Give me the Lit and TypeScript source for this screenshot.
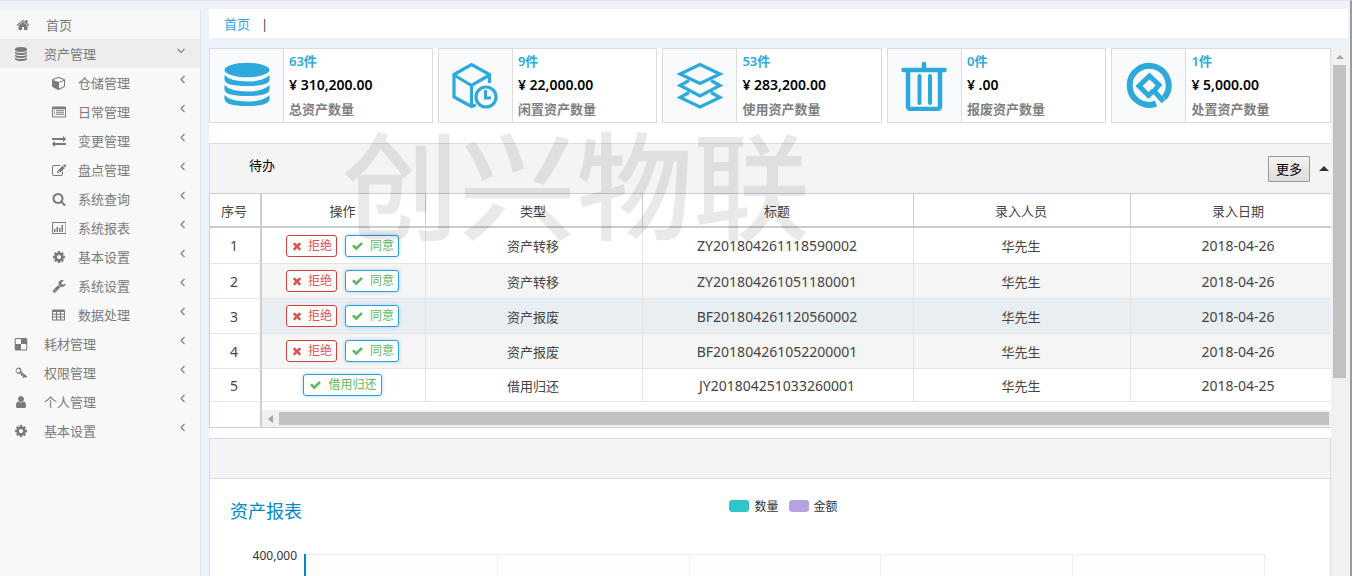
import { LitElement, html, css, svg, nothing } from "lit";
import { customElement, property } from "lit/decorators.js";
import { classMap } from "lit/directives/class-map.js";

const COG =
  "M1152 896q0-106-75-181t-181-75-181 75-75 181 75 181 181 75 181-75 75-181zm512-109v222q0 12-8 23t-20 13l-185 28q-19 54-39 91 35 50 107 138 10 12 10 25t-9 23q-27 37-99 108t-94 71q-12 0-26-9l-138-108q-44 23-91 38-16 136-29 186-7 28-36 28h-222q-14 0-24.5-8.5t-11.5-21.5l-28-184q-49-16-90-37l-141 107q-10 9-25 9-14 0-25-11-126-114-165-168-7-10-7-23 0-12 8-23 15-21 51-66.5t54-70.5q-27-50-41-99l-183-27q-13-2-21-12.5t-8-23.5v-222q0-12 8-23t19-13l186-28q14-46 39-92-40-57-107-138-10-12-10-24 0-10 9-23 26-36 98.5-107.5t94.5-71.5q13 0 26 10l138 107q44-23 91-38 16-136 29-186 7-28 36-28h222q14 0 24.5 8.5t11.5 21.5l28 184q49 16 90 37l142-107q9-9 24-9 13 0 25 10 129 119 165 170 7 8 7 22 0 12-8 23-15 21-51 66.5t-54 70.5q26 50 41 98l183 28q13 2 21 12.5t8 23.5z";

const ICONS: Record<string, string> = {
  home: "M1472 992v480q0 26-19 45t-45 19h-384v-384h-256v384h-384q-26 0-45-19t-19-45v-480q0-1 .5-3t.5-3l575-474 575 474q1 2 1 6zm223-69l-62 74q-8 9-21 11h-3q-13 0-21-7l-692-577-692 577q-12 8-24 7-13-2-21-11l-62-74q-8-10-7-23.5t11-21.5l719-599q32-26 76-26t76 26l244 204v-195q0-14 9-23t23-9h192q14 0 23 9t9 23v408l219 182q10 8 11 21.5t-7 23.5z",
  database:
    "M896 768q237 0 443-43t325-127v170q0 69-103 128t-280 93.5-385 34.5-385-34.5-280-93.5-103-128v-170q119 84 325 127t443 43zm0 768q237 0 443-43t325-127v170q0 69-103 128t-280 93.5-385 34.5-385-34.5-280-93.5-103-128v-170q119 84 325 127t443 43zm0-384q237 0 443-43t325-127v170q0 69-103 128t-280 93.5-385 34.5-385-34.5-280-93.5-103-128v-170q119 84 325 127t443 43zm0-1152q208 0 385 34.5t280 93.5 103 128v128q0 69-103 128t-280 93.5-385 34.5-385-34.5-280-93.5-103-128v-128q0-69 103-128t280-93.5 385-34.5z",
  cube: "M896 1629l640-349v-636l-640 233v752zm-64-865l698-254-698-254-698 254zm832-252v768q0 35-18 65t-49 47l-704 384q-28 16-61 16t-61-16l-704-384q-31-17-49-47t-18-65v-768q0-40 23-73t61-47l704-256q22-8 44-8t44 8l704 256q38 14 61 47t23 73z",
  list: "M128 192h1536q128 0 128 128v1152q0 128-128 128h-1536q-128 0-128-128v-1152q0-128 128-128zm0 320v960h1536v-960zm128 96h128v128h-128zm256 0h1024v128h-1024zm-256 256h128v128h-128zm256 0h1024v128h-1024zm-256 256h128v128h-128zm256 0h1024v128h-1024z",
  exchange:
    "M1792 1184v192q0 13-9.5 22.5t-22.5 9.5h-1376v192q0 13-9.5 22.5t-22.5 9.5q-12 0-24-10l-319-320q-9-9-9-22 0-14 9-23l320-320q9-9 23-9 13 0 22.5 9.5t9.5 22.5v192h1376q13 0 22.5 9.5t9.5 22.5zm0-544q0 14-9 23l-320 320q-9 9-23 9-13 0-22.5-9.5t-9.5-22.5v-192h-1376q-13 0-22.5-9.5t-9.5-22.5v-192q0-13 9.5-22.5t22.5-9.5h1376v-192q0-14 9-23t23-9q12 0 24 10l319 319q9 9 9 23z",
  edit: "M288 256h860l-128 128h-732q-160 0-160 160v832q0 160 160 160h832q160 0 160-160v-254l128-128v382q0 288-288 288h-832q-288 0-288-288v-832q0-288 288-288zm1060 96l288 288-672 672h-288v-288zm-544 728v104h96v96h56l96-96-152-152zm624-808l92-92q68-68 136 0l152 152q68 68 0 136l-92 92z",
  search:
    "M1216 832q0-185-131.5-316.5t-316.5-131.5-316.5 131.5-131.5 316.5 131.5 316.5 316.5 131.5 316.5-131.5 131.5-316.5zm512 832q0 52-38 90t-90 38q-54 0-90-38l-343-342q-179 124-399 124-143 0-273.5-55.5t-225-150-150-225-55.5-273.5 55.5-273.5 150-225 225-150 273.5-55.5 273.5 55.5 225 150 150 225 55.5 273.5q0 220-124 399l343 343q37 37 37 90z",
  chart:
    "M128 128h1600q128 0 128 128v1280q0 128-128 128h-1600q-128 0-128-128v-1280q0-128 128-128zm0 128v1280h1600v-1280zm128 768h192v384h-192zm320-256h192v640h-192zm320 128h192v512h-192zm320-384h192v896h-192z",
  cog: COG,
  wrench:
    "M448 1472q0-26-19-45t-45-19-45 19-19 45 19 45 45 19 45-19 19-45zm644-420l-682 682q-37 37-90 37-52 0-91-37l-106-108q-38-36-38-90 0-53 38-91l681-681q39 98 114.5 173.5t173.5 114.5zm634-435q0 39-23 106-47 134-164.5 217.5t-258.5 83.5q-185 0-316.5-131.5t-131.5-316.5 131.5-316.5 316.5-131.5q58 0 121.5 16.5t107.5 46.5q16 11 16 28t-16 28l-293 169v224l193 107q5-3 79-48.5t135.5-81 70.5-35.5q15 0 23.5 10t8.5 25z",
  grid: "M128 192h1408q128 0 128 128v1152q0 128-128 128h-1408q-128 0-128-128v-1152q0-128 128-128zm0 320v224h384v-224zm512 0v224h384v-224zm512 0v224h384v-224zm-1024 352v224h384v-224zm512 0v224h384v-224zm512 0v224h384v-224zm-1024 352v256h384v-256zm512 0v256h384v-256zm512 0v256h384v-256z",
  blocks:
    "M256 128h1280q160 0 160 160v1280q0 160-160 160h-1280q-160 0-160-160v-1280q0-160 160-160zm-32 128v640h672v-640zm672 640v704h672v-704z",
  key: "M540 156q180 0 300 120t120 300q0 80-36 160l740 560q40 36 8 84l-72 88q-40 44-88 8l-110-84-118 150q-36 40-80 8l-92-72q-40-36-8-80l116-152-100-76-78 100q-36 40-80 8l-86-68q-40-36-8-80l76-98-90-68q-100 56-220 56-180 0-300-120t-120-300 120-300 300-120zm0 200q-100 0-166 66t-66 166 66 166 166 66 166-66 66-166-66-166-166-66z",
  user: "M1536 1399q0 109-62.5 187t-150.5 78h-854q-88 0-150.5-78t-62.5-187q0-85 8.5-160.5t31.5-152 58.5-131 94-89 134.5-34.5q131 128 313 128t313-128q76 0 134.5 34.5t94 89 58.5 131 31.5 152 8.5 160.5zm-256-887q0 159-112.5 271.5t-271.5 112.5-271.5-112.5-112.5-271.5 112.5-271.5 271.5-112.5 271.5 112.5 112.5 271.5z",
  check:
    "M1671 566q0 40-28 68l-724 724-136 136q-28 28-68 28t-68-28l-136-136-362-362q-28-28-28-68t28-68l136-136q28-28 68-28t68 28l294 295 656-657q28-28 68-28t68 28l136 136q28 28 28 68z",
  times:
    "M1490 1322q0 40-28 68l-136 136q-28 28-68 28t-68-28l-294-294-294 294q-28 28-68 28t-68-28l-136-136q-28-28-28-68t28-68l294-294-294-294q-28-28-28-68t28-68l136-136q28-28 68-28t68 28l294 294 294-294q28-28 68-28t68 28l136 136q28 28 28 68t-28 68l-294 294 294 294q28 28 28 68z",
};

const icon = (name: string) =>
  html`<svg class="icon" viewBox="0 0 1792 1792" aria-hidden="true">
    <path fill="currentColor" fill-rule="evenodd" d=${ICONS[name]}></path>
  </svg>`;

interface MenuItem {
  icon: string;
  label: string;
  level: "root" | "top" | "sub";
  state?: "open" | "closed";
}

const MENU: MenuItem[] = [
  { icon: "home", label: "首页", level: "root" },
  { icon: "database", label: "资产管理", level: "top", state: "open" },
  { icon: "cube", label: "仓储管理", level: "sub", state: "closed" },
  { icon: "list", label: "日常管理", level: "sub", state: "closed" },
  { icon: "exchange", label: "变更管理", level: "sub", state: "closed" },
  { icon: "edit", label: "盘点管理", level: "sub", state: "closed" },
  { icon: "search", label: "系统查询", level: "sub", state: "closed" },
  { icon: "chart", label: "系统报表", level: "sub", state: "closed" },
  { icon: "cog", label: "基本设置", level: "sub", state: "closed" },
  { icon: "wrench", label: "系统设置", level: "sub", state: "closed" },
  { icon: "grid", label: "数据处理", level: "sub", state: "closed" },
  { icon: "blocks", label: "耗材管理", level: "top", state: "closed" },
  { icon: "key", label: "权限管理", level: "top", state: "closed" },
  { icon: "user", label: "个人管理", level: "top", state: "closed" },
  { icon: "cog", label: "基本设置", level: "top", state: "closed" },
];

const FONT = css`"Noto Sans", "Noto Sans CJK SC", sans-serif`;

@customElement("side-menu")
class SideMenu extends LitElement {
  static styles = css`
    :host {
      display: block;
      background: #f8f8f8;
      border-right: 1px solid #e4e6e8;
      font-family: ${FONT};
    }
    .list {
      list-style: none;
      margin: 0;
      padding: 0;
    }
    .item {
      display: flex;
      align-items: center;
      height: 29px;
      padding: 0 14px;
      gap: 16px;
      font-size: 13px;
      color: #7a7a7a;
      text-decoration: none;
    }
    .root {
      padding-left: 16px;
    }
    .sub {
      padding-left: 52px;
      gap: 12px;
    }
    .open {
      background: #ededed;
    }
    .icon {
      width: 14px;
      height: 14px;
      flex: none;
    }
    .label {
      flex: 1;
    }
    .arrow {
      width: 9px;
      height: 9px;
      margin-bottom: 7px;
    }
  `;

  render() {
    return html`<nav aria-label="主菜单">
      <ul class="list">
        ${MENU.map(
          (m) => html`<li>
            <a
              href="#"
              class=${classMap({ item: true, [m.level]: true, open: m.state === "open" })}
            >
              ${icon(m.icon)}<span class="label">${m.label}</span>
              ${m.state
                ? html`<svg class="arrow" viewBox="0 0 9 9" aria-hidden="true">
                    <path
                      d=${m.state === "open" ? "M.5 3L4 6.500L7.500 3" : "M7.500 1L4 4.500L7.500 8"}
                      fill="none"
                      stroke="#808080"
                      stroke-width="1.200"
                    ></path>
                  </svg>`
                : nothing}
            </a>
          </li>`
        )}
      </ul>
    </nav>`;
  }
}

const STAT_ART: Record<string, unknown> = {
  total: svg`<g fill="#2da9dc"><ellipse cx="24" cy="9" rx="22.500" ry="7.200"/>
    <path d="M1.500 14q6 6.500 22.500 6.500t22.500-6.500v4.500q0 6.500-22.500 6.500t-22.500-6.500z"/>
    <path d="M1.500 24q6 6.500 22.500 6.500t22.500-6.500v4.500q0 6.500-22.500 6.500t-22.500-6.500z"/>
    <path d="M1.500 34q6 6.500 22.500 6.500t22.500-6.500v4q0 7-22.500 7t-22.500-7z"/></g>`,
  idle: svg`<g fill="none" stroke="#2da9dc" stroke-width="3.200"><path d="M38.500 22V13.500L20.500 3.500L3 13.500V36L20.500 45.500L25 44"/>
    <path d="M3 14L20.500 24.500L38.500 14M20.500 24V45"/><circle cx="35" cy="36" r="10"/><path d="M34.500 29v8h5.500" stroke-width="3"/></g>`,
  used: svg`<g fill="none" stroke="#2da9dc" stroke-width="3.200"><path d="M24 3.500L44 13L24 22.500L4 13z"/>
    <path d="M13 19.500L4 24.500L24 35L44 24.500L35 19.500M13 31.500L4 36.500L24 46L44 36.500L35 31.500"/></g>`,
  scrap: svg`<g fill="none" stroke="#2da9dc" stroke-linecap="round"><path d="M3.500 9h41M24 3v5" stroke-width="4.500"/>
    <path d="M8 10V45q0 3 3 3H37q3 0 3-3V10" stroke-width="4.500"/><path d="M19.500 15v27M30 15v27" stroke-width="4"/></g>`,
  dispose: svg`<g fill="none" stroke="#2da9dc"><path d="M31 42.600A19.500 19.500 0 1 1 39 37" stroke-width="6"/>
    <path d="M28.500 29.500L23.500 34.500L14 25L24.500 15L34 24L29 30L38.500 40.500" stroke-width="5"/></g>`,
};

@customElement("stat-card")
class StatCard extends LitElement {
  @property() art = "total";
  @property() count = "";
  @property() amount = "";
  @property() caption = "";

  static styles = css`
    :host {
      display: flex;
      border: 1px solid #dcdcdc;
      background: #fff;
      font-family: ${FONT};
      font-size: 13px;
      font-weight: 600;
      line-height: 24px;
      min-width: 0;
    }
    .art {
      flex: none;
      width: 73px;
      display: flex;
      align-items: center;
      justify-content: center;
      background: #f9fafc;
      border-right: 1px solid #dcdcdc;
    }
    .drawing {
      width: 48px;
      height: 50px;
    }
    .facts {
      padding: 0 5px 1px;
      white-space: nowrap;
    }
    .count {
      color: #2da9dc;
    }
    .amount {
      color: #000;
      font-size: 14px;
    }
    .caption {
      color: #7f7f7f;
    }
  `;

  render() {
    return html`<div class="art">
        <svg class="drawing" viewBox="0 0 48 50" aria-hidden="true">${STAT_ART[this.art]}</svg>
      </div>
      <div class="facts">
        <div class="count">${this.count}</div>
        <div class="amount">${this.amount}</div>
        <div class="caption">${this.caption}</div>
      </div>`;
  }
}

const STATS = [
  ["total", "63件", "¥ 310,200.00", "总资产数量"],
  ["idle", "9件", "¥ 22,000.00", "闲置资产数量"],
  ["used", "53件", "¥ 283,200.00", "使用资产数量"],
  ["scrap", "0件", "¥ .00", "报废资产数量"],
  ["dispose", "1件", "¥ 5,000.00", "处置资产数量"],
];

const ROWS = [
  ["资产转移", "ZY201804261118590002", "华先生", "2018-04-26"],
  ["资产转移", "ZY201804261051180001", "华先生", "2018-04-26"],
  ["资产报废", "BF201804261120560002", "华先生", "2018-04-26"],
  ["资产报废", "BF201804261052200001", "华先生", "2018-04-26"],
  ["借用归还", "JY201804251033260001", "华先生", "2018-04-25"],
];

@customElement("todo-table")
class TodoTable extends LitElement {
  static styles = css`
    :host {
      display: block;
      border: solid #d0d0d0;
      border-width: 0 0 1px 1px;
      overflow: hidden;
      font-family: ${FONT};
    }
    .table {
      width: calc(100% + 17px);
      table-layout: fixed;
      border-collapse: separate;
      border-spacing: 0;
      color: #444;
      font-size: 13px;
    }
    .c-no {
      width: 52px;
    }
    .c-act {
      width: 164px;
    }
    .c-mid {
      width: 217px;
    }
    .c-title {
      width: 271px;
    }
    th {
      height: 32px;
      padding: 0 2px 0 0;
      font-weight: 400;
      border-right: 1px solid #ccc;
      border-bottom: 2px solid #ccc;
    }
    td {
      height: 34px;
      padding: 0 2px 0 0;
      text-align: center;
      border-right: 1px solid #e4e4e4;
      border-bottom: 1px solid #e4e4e4;
    }
    th:first-child,
    td:first-child {
      border-right: 2px solid #ccc;
    }
    .first td {
      height: 35px;
    }
    .last td {
      height: 32px;
    }
    .even td:not(:first-child) {
      background: #f5f5f5;
    }
    .hover td:not(:first-child) {
      background: #e9eef3;
    }
    .code {
      font-size: 14px;
    }
    .actions {
      display: flex;
      justify-content: center;
      gap: 8px;
    }
    .act {
      display: flex;
      align-items: center;
      gap: 5px;
      height: 22px;
      padding: 0 4px;
      box-sizing: border-box;
      border: 1px solid #d43f3a;
      border-radius: 3px;
      background: #fff;
      color: #d9534f;
      font: 12px/18px ${FONT};
    }
    .ok {
      border-color: #2a9fd8;
      color: #5cb85c;
      box-shadow: 0 0 4px #a9d4f0;
    }
    .icon {
      width: 12px;
      height: 12px;
    }
    .ok .icon {
      width: 15px;
    }
    .foot {
      display: flex;
      height: 25px;
    }
    .corner {
      width: 50px;
      border-right: 2px solid #ccc;
    }
    .track {
      flex: 1;
      display: flex;
      align-items: center;
      gap: 6px;
      height: 17px;
      margin-top: 8px;
      padding: 0 2px 0 6px;
      background: #f1f1f1;
    }
    .left {
      border: 4px solid transparent;
      border-width: 4px 5px 4px 0;
      border-right-color: #a3a3a3;
    }
    .thumb {
      flex: 1;
      height: 13px;
      background: #c1c1c1;
    }
  `;

  render() {
    return html`<table class="table">
        <colgroup>
          <col class="c-no" /><col class="c-act" /><col class="c-mid" />
          <col class="c-title" /><col class="c-mid" /><col class="c-mid" />
        </colgroup>
        <thead>
          <tr>
            ${["序号", "操作", "类型", "标题", "录入人员", "录入日期"].map(
              (h) => html`<th scope="col">${h}</th>`
            )}
          </tr>
        </thead>
        <tbody>
          ${ROWS.map(
            ([kind, code, who, date], i) => html`<tr
              class=${classMap({ first: i === 0, even: i % 2 === 1, hover: i === 2, last: i === 4 })}
            >
              <td class="code">${i + 1}</td>
              <td>
                <div class="actions">
                  ${i === 4
                    ? html`<button type="button" class="act ok">${icon("check")}借用归还</button>`
                    : html`<button type="button" class="act">${icon("times")}拒绝</button>
                        <button type="button" class="act ok">${icon("check")}同意</button>`}
                </div>
              </td>
              <td>${kind}</td>
              <td class="code">${code}</td>
              <td>${who}</td>
              <td class="code">${date}</td>
            </tr>`
          )}
        </tbody>
      </table>
      <div class="foot">
        <div class="corner"></div>
        <div class="track"><span class="left"></span><span class="thumb"></span></div>
      </div>`;
  }
}

@customElement("asset-chart")
class AssetChart extends LitElement {
  static styles = css`
    :host {
      display: block;
      padding: 0 65px 0 20px;
      font-family: ${FONT};
      font-size: 12px;
      color: #333;
    }
    .head {
      display: grid;
      grid-template-columns: 1fr auto 1fr;
      height: 75px;
      padding-top: 18px;
      box-sizing: border-box;
    }
    .title {
      margin: 0;
      font-size: 18px;
      font-weight: 400;
      line-height: 28px;
      color: #008acd;
    }
    .legend {
      display: flex;
      gap: 10px;
      height: 18px;
      align-items: center;
      margin-left: 72px;
    }
    .key {
      display: flex;
      align-items: center;
      gap: 5px;
    }
    .swatch {
      width: 20px;
      height: 12px;
      border-radius: 3px;
      background: #2ec7c9;
    }
    .money {
      background: #b6a2de;
    }
    .plot {
      display: flex;
      gap: 7px;
    }
    .axis {
      width: 67px;
      text-align: right;
      line-height: 16px;
      margin-top: -6px;
    }
    .cells {
      flex: 1;
      display: grid;
      grid-template-columns: repeat(5, 1fr);
      height: 240px;
      border-left: 2px solid #008acd;
    }
    .cell {
      border: solid #eee;
      border-width: 1px 1px 0 0;
      background: #fdfdfd;
    }
  `;

  render() {
    return html`<div class="head">
        <h2 class="title">资产报表</h2>
        <div class="legend">
          <span class="key"><span class="swatch"></span>数量</span>
          <span class="key"><span class="swatch money"></span>金额</span>
        </div>
      </div>
      <div class="plot">
        <div class="axis">400,000</div>
        <div class="cells">${[0, 1, 2, 3, 4].map(() => html`<div class="cell"></div>`)}</div>
      </div>`;
  }
}

@customElement("app-root")
class AppRoot extends LitElement {
  static styles = css`
    :host {
      display: flex;
      position: relative;
      height: 100vh;
      box-sizing: border-box;
      overflow: hidden;
      border-top: 1px solid #e4e5e7;
      border-right: 2px solid #9b9b9b;
      background: #edf1fa;
      font-family: ${FONT};
      font-size: 13px;
      color: #000;
    }
    .side {
      flex: none;
      width: 200px;
      margin-top: 9px;
    }
    .main {
      flex: 1;
      min-width: 0;
      display: flex;
      flex-direction: column;
      gap: 10px;
      padding: 8px 2px 0 8px;
    }
    .crumbs {
      flex: none;
      display: flex;
      align-items: center;
      gap: 11px;
      height: 29px;
      padding: 0 15px;
      background: #fff;
      color: #444;
    }
    .crumb {
      color: #2da9dc;
      text-decoration: none;
    }
    .scroller {
      flex: 1;
      min-height: 0;
      display: flex;
    }
    .page {
      flex: 1;
      min-width: 0;
      overflow: hidden;
      background: #fff;
    }
    .cards {
      display: grid;
      grid-template-columns: 102fr repeat(4, 100fr);
      gap: 5px;
      height: 75px;
      margin-bottom: 20px;
    }
    .bar {
      display: flex;
      align-items: center;
      gap: 9px;
      height: 51px;
      box-sizing: border-box;
      padding: 0 2px 0 39px;
      border: 1px solid #dcdcdc;
      border-right: 0;
      border-bottom-color: #ccc;
      background: #f4f4f4;
    }
    .name {
      flex: 1;
      margin: 0;
      padding-bottom: 8px;
      font-size: 13px;
      font-weight: 400;
    }
    .more {
      height: 26px;
      padding: 0 7px;
      border: 1px solid #999;
      border-radius: 1px;
      background: linear-gradient(#f4f4f4, #dcdcdc);
      font: 13px/20px ${FONT};
      color: #000;
    }
    .fold {
      border: 5px solid transparent;
      border-width: 0 5px 5px;
      border-bottom-color: #333;
    }
    .report {
      margin-top: 10px;
      border: 1px solid #dcdcdc;
    }
    .strip {
      height: 39px;
      background: #f4f4f4;
      border-bottom: 1px solid #dcdcdc;
    }
    .vbar {
      flex: none;
      width: 17px;
      box-sizing: border-box;
      padding: 7px 2px 0;
      background: #f1f1f1;
      display: flex;
      flex-direction: column;
      align-items: center;
      gap: 6px;
    }
    .up {
      border: 4px solid transparent;
      border-width: 0 4px 4px;
      border-bottom-color: #a3a3a3;
    }
    .grip {
      width: 13px;
      height: 60%;
      background: #c1c1c1;
    }
    .watermark {
      position: absolute;
      left: 342px;
      top: 126px;
      font-size: 117px;
      font-weight: 500;
      line-height: 117px;
      color: rgba(0, 0, 0, 0.085);
      white-space: nowrap;
      pointer-events: none;
    }
  `;

  render() {
    return html`<side-menu class="side"></side-menu>
      <main class="main">
        <div class="crumbs"><a class="crumb" href="#">首页</a><span>|</span></div>
        <div class="scroller">
          <div class="page">
            <section class="cards">
              ${STATS.map(
                ([art, count, amount, caption]) => html`<stat-card
                  art=${art}
                  count=${count}
                  amount=${amount}
                  caption=${caption}
                ></stat-card>`
              )}
            </section>
            <section>
              <header class="bar">
                <h2 class="name">待办</h2>
                <button type="button" class="more">更多</button>
                <span class="fold"></span>
              </header>
              <todo-table></todo-table>
            </section>
            <section class="report">
              <div class="strip"></div>
              <asset-chart></asset-chart>
            </section>
          </div>
          <div class="vbar"><span class="up"></span><span class="grip"></span></div>
        </div>
      </main>
      <div class="watermark" aria-hidden="true">创兴物联</div>`;
  }
}
